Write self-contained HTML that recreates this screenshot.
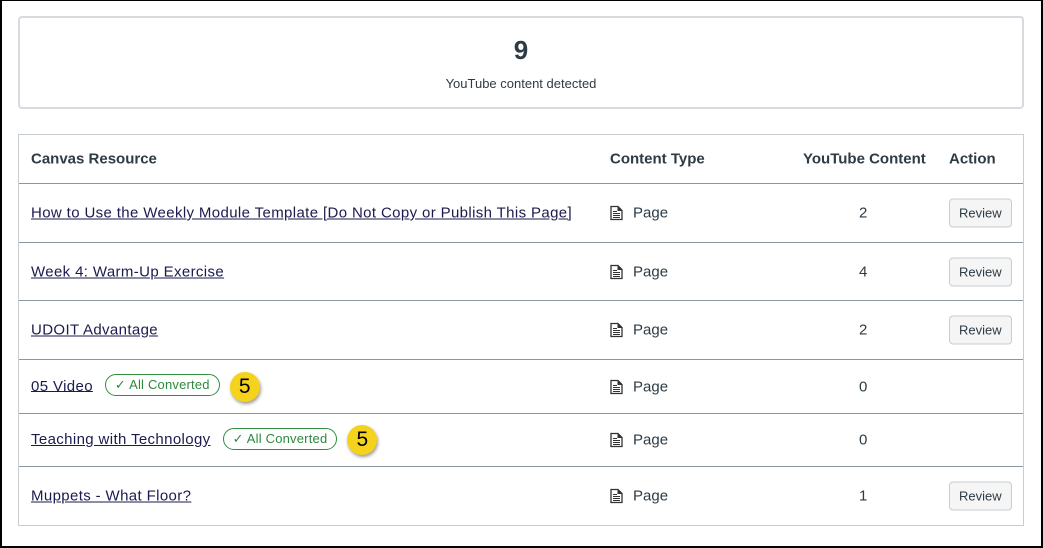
<!DOCTYPE html>
<html><head><meta charset="utf-8"><style>
*{box-sizing:border-box;margin:0;padding:0}
body{width:1043px;height:548px;background:#fff;font-family:"Liberation Sans",sans-serif;color:#2d3b45;position:relative;overflow:hidden}
.frame{position:absolute;left:0;top:0;width:1043px;height:548px;border:2px solid #000;border-top-width:1px}
.sum{position:absolute;left:18px;top:16px;width:1006px;height:93px;border:2px solid #d7dade;border-radius:4px;text-align:center}
.sum .n{font-size:26px;font-weight:bold;margin-top:17px;color:#2d3b45}
.sum .l{font-size:13px;margin-top:10px;color:#2d3b45}
.tbl{position:absolute;left:18px;top:134px;width:1006px;height:392px;border:1px solid #c7cdd1}
.row{position:absolute;left:0;width:1004px;border-bottom:1px solid #8b969e}
.row>div{position:absolute;top:50%;transform:translateY(-50%);font-size:15px;white-space:nowrap}
.c1{left:12px}.c2{left:591px;display:flex;align-items:center}.c3{left:840px}.c4{left:930px}
.h{font-weight:bold}
a{text-decoration:underline;color:#1a1a4e;letter-spacing:0.37px}
.badge{display:inline-block;border:1px solid #2f8f3f;color:#2b8a3e;border-radius:12px;font-size:13px;padding:2px 9px;margin-left:12px;vertical-align:1px;letter-spacing:0.2px}
.num{display:inline-block;width:30px;height:30px;border-radius:50%;background:#f5d21b;color:#000;font-size:21px;text-align:center;line-height:30px;margin-left:10px;box-shadow:1px 2px 3px rgba(0,0,0,.4);vertical-align:middle}
.btn{border:1px solid #c7cdd1;background:#f5f5f5;border-radius:4px;font-size:13px;padding:6px 9px;color:#2d3b45}
svg{margin-right:10px}
</style></head><body>
<div class="sum"><div class="n">9</div><div class="l">YouTube content detected</div></div>
<div class="tbl">
<div class="row" style="top:0;height:49px"><div class="c1 h">Canvas Resource</div><div class="c2 h">Content Type</div><div class="c3 h" style="left:784px">YouTube Content</div><div class="c4 h">Action</div></div>
<div class="row" style="top:49px;height:59px"><div class="c1"><a>How to Use the Weekly Module Template [Do Not Copy or Publish This Page]</a></div><div class="c2"><svg width="13" height="15" viewBox="0 0 13 15"><path d="M1 1h7l4 4v9H1z" fill="none" stroke="#333" stroke-width="1.3"/><path d="M8 1v4h4" fill="#333" stroke="#333"/><path d="M3 6h4M3 8h7M3 10h7M3 12h7" stroke="#333"/></svg>Page</div><div class="c3">2</div><div class="c4"><span class="btn">Review</span></div></div>
<div class="row" style="top:108px;height:58px"><div class="c1"><a>Week 4: Warm-Up Exercise</a></div><div class="c2"><svg width="13" height="15" viewBox="0 0 13 15"><path d="M1 1h7l4 4v9H1z" fill="none" stroke="#333" stroke-width="1.3"/><path d="M8 1v4h4" fill="#333" stroke="#333"/><path d="M3 6h4M3 8h7M3 10h7M3 12h7" stroke="#333"/></svg>Page</div><div class="c3">4</div><div class="c4"><span class="btn">Review</span></div></div>
<div class="row" style="top:166px;height:59px"><div class="c1"><a>UDOIT Advantage</a></div><div class="c2"><svg width="13" height="15" viewBox="0 0 13 15"><path d="M1 1h7l4 4v9H1z" fill="none" stroke="#333" stroke-width="1.3"/><path d="M8 1v4h4" fill="#333" stroke="#333"/><path d="M3 6h4M3 8h7M3 10h7M3 12h7" stroke="#333"/></svg>Page</div><div class="c3">2</div><div class="c4"><span class="btn">Review</span></div></div>
<div class="row" style="top:225px;height:54px"><div class="c1"><a>05 Video</a><span class="badge">✓ All Converted</span><span class="num">5</span></div><div class="c2"><svg width="13" height="15" viewBox="0 0 13 15"><path d="M1 1h7l4 4v9H1z" fill="none" stroke="#333" stroke-width="1.3"/><path d="M8 1v4h4" fill="#333" stroke="#333"/><path d="M3 6h4M3 8h7M3 10h7M3 12h7" stroke="#333"/></svg>Page</div><div class="c3">0</div></div>
<div class="row" style="top:279px;height:53px"><div class="c1"><a>Teaching with Technology</a><span class="badge">✓ All Converted</span><span class="num">5</span></div><div class="c2"><svg width="13" height="15" viewBox="0 0 13 15"><path d="M1 1h7l4 4v9H1z" fill="none" stroke="#333" stroke-width="1.3"/><path d="M8 1v4h4" fill="#333" stroke="#333"/><path d="M3 6h4M3 8h7M3 10h7M3 12h7" stroke="#333"/></svg>Page</div><div class="c3">0</div></div>
<div class="row" style="top:332px;height:58px;border-bottom:none"><div class="c1"><a>Muppets - What Floor?</a></div><div class="c2"><svg width="13" height="15" viewBox="0 0 13 15"><path d="M1 1h7l4 4v9H1z" fill="none" stroke="#333" stroke-width="1.3"/><path d="M8 1v4h4" fill="#333" stroke="#333"/><path d="M3 6h4M3 8h7M3 10h7M3 12h7" stroke="#333"/></svg>Page</div><div class="c3">1</div><div class="c4"><span class="btn">Review</span></div></div>
</div>
<div class="frame"></div>
</body></html>
